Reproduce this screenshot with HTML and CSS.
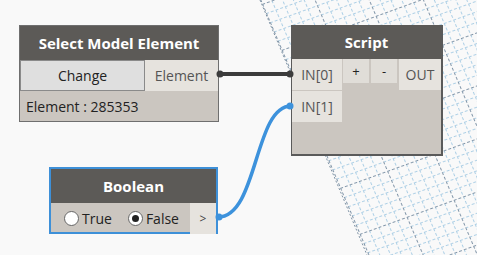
FILE: index.html
```html
<!DOCTYPE html>
<html lang="en">
<head>
    <meta charset="UTF-8">
    <title>Dynamo Graph</title>
    <link rel="stylesheet" href="styles.css">
</head>
<body>
    <div id="canvas">
        <!-- background grid -->
        <svg class="grid" width="477" height="255" viewBox="0 0 477 255">
            <defs>
                <pattern id="cells" width="50" height="50" patternUnits="userSpaceOnUse"
                         patternTransform="matrix(0.94 -0.34 0.39 0.92 262 4)">
                    <g stroke="#aed0e6" stroke-width="1" stroke-dasharray="3 2" fill="none">
                        <path d="M0 10.5H50M0 20.5H50M0 30.5H50M0 40.5H50"/>
                        <path d="M10.5 0V50M20.5 0V50M30.5 0V50M40.5 0V50"/>
                    </g>
                    <g stroke="#8397aa" stroke-width="1" stroke-dasharray="3 2" fill="none">
                        <path d="M0 0.5H50M0.5 0V50"/>
                    </g>
                </pattern>
                <clipPath id="area">
                    <polygon points="260,0 477,0 477,255 367,255"/>
                </clipPath>
            </defs>
            <rect width="477" height="255" fill="url(#cells)" clip-path="url(#area)"/>
            <line x1="260" y1="0" x2="367" y2="255" stroke="#7f93a5" stroke-width="1" stroke-dasharray="2 2"/>
        </svg>

        <!-- wires -->
        <svg class="wires" width="477" height="255" viewBox="0 0 477 255">
            <path d="M219 74H291" stroke="#3c3c3c" stroke-width="4" fill="none"/>
            <circle cx="220" cy="74" r="3.5" fill="#3c3c3c"/>
            <circle cx="290" cy="74" r="3.5" fill="#3c3c3c"/>
            <path d="M218 217C258 217 254 106 291 106" stroke="#3d92dc" stroke-width="3.5" fill="none"/>
            <circle cx="219" cy="217" r="3.5" fill="#3d92dc"/>
            <circle cx="290" cy="106" r="3.5" fill="#3d92dc"/>
        </svg>

        <div class="node select">
            <div class="header">Select Model Element</div>
            <div class="row">
                <div class="button change">Change</div>
                <div class="port out">Element</div>
            </div>
            <div class="info">Element : 285353</div>
        </div>

        <div class="node script">
            <div class="header">Script</div>
            <div class="body">
                <div class="inputs">
                    <div class="port in">IN[0]</div>
                    <div class="port in">IN[1]</div>
                </div>
                <div class="tools">
                    <div class="button small">+</div>
                    <div class="button small">-</div>
                </div>
                <div class="port out result">OUT</div>
            </div>
        </div>

        <div class="node boolean">
            <div class="header">Boolean</div>
            <div class="row">
                <div class="choices">
                    <label class="choice"><span class="radio"></span>True</label>
                    <label class="choice"><span class="radio checked"></span>False</label>
                </div>
                <div class="port arrow">&gt;</div>
            </div>
        </div>
    </div>
</body>
</html>
```

FILE: styles.css
```css
body {
    margin: 0;
    font-family: "Open Sans", "Noto Sans", sans-serif;
}

#canvas {
    position: relative;
    width: 477px;
    height: 255px;
    overflow: hidden;
    background-color: #f9f9f9;
}

.grid,
.wires {
    position: absolute;
    top: 0;
    left: 0;
}

.wires {
    z-index: 2;
}

.node {
    position: absolute;
    z-index: 1;
    box-sizing: border-box;
    background-color: #cbc6c0;
    color: #333;
    font-size: 13px;
}

.header {
    height: 34px;
    background-color: #5c5a57;
    color: #fff;
    font-weight: 700;
    font-size: 15px;
    display: flex;
    align-items: center;
    justify-content: center;
}

.port {
    background-color: #e6e3de;
    color: #555;
    display: flex;
    align-items: center;
    justify-content: center;
    font-size: 14px;
}

.button {
    background-color: #e0ddd8;
    display: flex;
    align-items: center;
    justify-content: center;
}

/* select model element */
.select {
    left: 19px;
    top: 25px;
    width: 200px;
    height: 97px;
    border: 1px solid #6f6f6f;
}

.select .row {
    display: flex;
    height: 31px;
}

.change {
    width: 125px;
    box-sizing: border-box;
    border: 1px solid #8a8a8a;
    background-color: #dfdfdf;
    color: #222;
    font-size: 14px;
}

.select .out {
    flex: 1;
}

.info {
    height: 30px;
    display: flex;
    align-items: center;
    padding-left: 6px;
    font-size: 14px;
    color: #222;
}

/* script */
.script {
    left: 291px;
    top: 25px;
    width: 152px;
    height: 131px;
    border: 1px solid #555;
    border-width: 0 2px 2px 1px;
    border-color: #5a5a5a;
}

.script .body {
    display: flex;
}

.inputs {
    display: flex;
    flex-direction: column;
    gap: 1px;
}

.inputs .in {
    width: 50px;
    height: 31px;
}

.tools {
    display: flex;
    gap: 2px;
    padding: 0 2px 0 1px;
}

.small {
    width: 26px;
    height: 24px;
    color: #222;
    font-size: 13px;
}

.result {
    flex: 1;
    height: 31px;
}

/* boolean */
.boolean {
    left: 49px;
    top: 167px;
    width: 169px;
    height: 67px;
    border: 2px solid #3e90d8;
}

.boolean .row {
    display: flex;
    height: 31px;
}

.choices {
    flex: 1;
    display: flex;
    align-items: center;
    gap: 16px;
    padding-left: 13px;
}

.choice {
    display: flex;
    align-items: center;
    gap: 3px;
    font-size: 14px;
    color: #222;
}

.radio {
    width: 13px;
    height: 13px;
    border: 1px solid #666;
    border-radius: 50%;
    background-color: #fff;
    display: flex;
    align-items: center;
    justify-content: center;
}

.radio.checked::after {
    content: "";
    width: 7px;
    height: 7px;
    border-radius: 50%;
    background-color: #222;
}

.arrow {
    width: 26px;
    font-size: 12px;
    color: #444;
}
```
